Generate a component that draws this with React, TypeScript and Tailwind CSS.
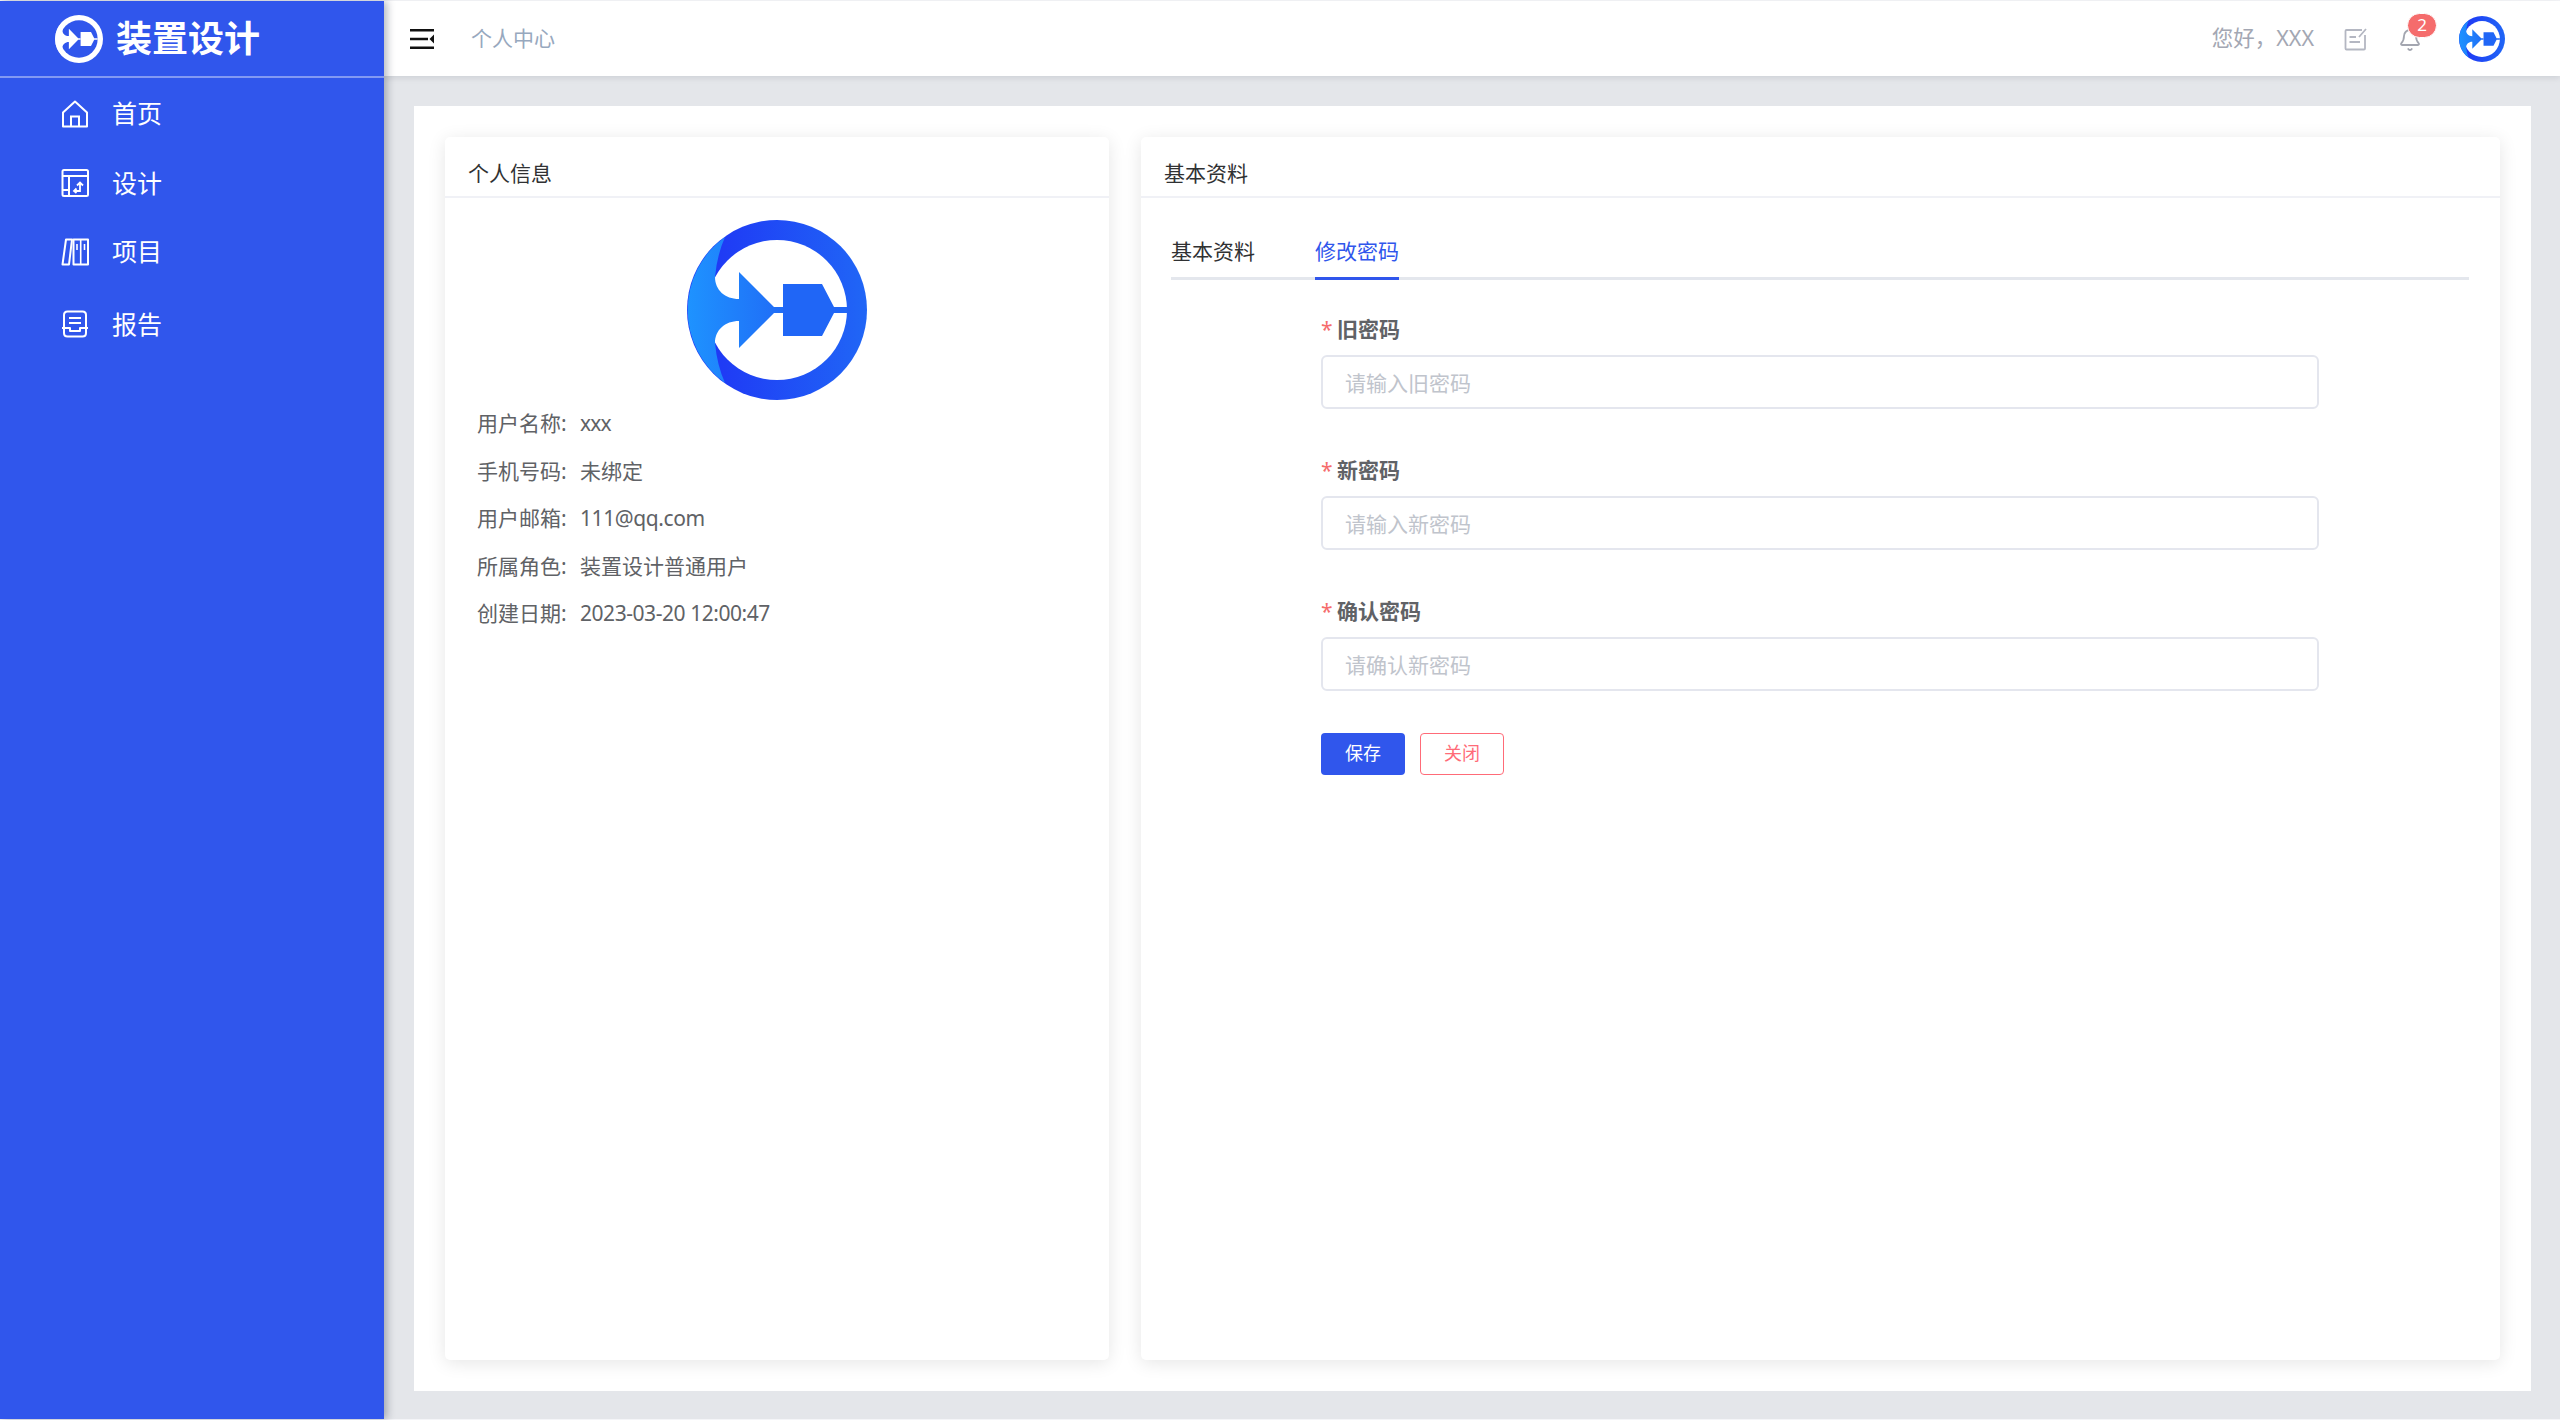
import { Bell } from 'lucide-react'

const FONT = "font-['Noto_Sans','Noto_Sans_CJK_SC',sans-serif]"

// company mark, traced from the avatar
function Logo({ mono = false, className = '' }: { mono?: boolean; className?: string }) {
  return (
    <svg viewBox="0 0 180 180" className={className}>
      <defs>
        <linearGradient id="ring" gradientUnits="userSpaceOnUse" x1="30" y1="0" x2="180" y2="0">
          <stop offset="0" stopColor="#1f3af5" />
          <stop offset="1" stopColor="#2066f6" />
        </linearGradient>
        <linearGradient id="lens" gradientUnits="userSpaceOnUse" x1="0" y1="0" x2="96" y2="0">
          <stop offset="0" stopColor="#1e93ff" />
          <stop offset="1" stopColor="#206cf6" />
        </linearGradient>
      </defs>
      <circle cx="90" cy="90" r="90" fill={mono ? '#ffffff' : 'url(#ring)'} />
      <circle cx="90" cy="90" r="70" fill={mono ? '#3056ec' : '#ffffff'} />
      <path
        d="M38 17Q30 35 28 57C28 70 38 79 52 79L52 52L87 87L96 87L96 93L87 93L52 128L52 101C38 101 28 110 28 123Q30 145 38 163A90 90 0 0 1 38 17Z"
        fill={mono ? '#ffffff' : 'url(#lens)'}
      />
      <path d="M96 64L135 64L147 87L160 87L160 93L147 93L135 116L96 116Z" fill={mono ? '#ffffff' : '#2066f6'} />
    </svg>
  )
}

function HomeIcon() {
  return (
    <svg viewBox="0 0 28 28" className="w-[28px] h-[28px]" fill="none" stroke="currentColor" strokeWidth="2">
      <path d="M2 12.5L14 1.5L26 12.5V26.5H2Z" strokeLinejoin="round" />
      <path d="M10 26.5V16.5H18V26.5" />
    </svg>
  )
}

function DesignIcon() {
  return (
    <svg viewBox="0 0 28 28" className="w-[28px] h-[28px]" fill="none" stroke="currentColor" strokeWidth="2">
      <rect x="1.5" y="1" width="25.5" height="26" rx="1.5" />
      <path d="M1.5 7H27M8 7V27M1.5 21H8" />
      <path d="M13 22H19V14M16 16.5L19 13.5L22 16.5M15.5 19.5L13 22L15.5 24" strokeWidth="1.8" />
    </svg>
  )
}

function ProjectIcon() {
  return (
    <svg viewBox="0 0 28 28" className="w-[28px] h-[28px]" fill="none" stroke="currentColor" strokeWidth="2">
      <path d="M5 1.5H11L8 26.5H1.5Z" strokeLinejoin="round" />
      <path d="M12.5 1.5H27V26.5H12.5Z" strokeLinejoin="round" />
      <path d="M19.7 1.5V26.5M16 6V12M23.5 6V12" strokeWidth="1.6" />
    </svg>
  )
}

function ReportIcon() {
  return (
    <svg viewBox="0 0 28 28" className="w-[28px] h-[28px]" fill="none" stroke="currentColor" strokeWidth="2">
      <path d="M3 17V5Q3 1.5 6.5 1.5H21.5Q25 1.5 25 5V17" />
      <path d="M8 8H20M8 13H20" />
      <path d="M1 18H9V21H19V18H27M3 18V23Q3 26.5 6.5 26.5H21.5Q25 26.5 25 23V18" strokeLinejoin="round" />
    </svg>
  )
}

const menu = [
  { label: '首页', icon: <HomeIcon />, h: 'h-[71px]' },
  { label: '设计', icon: <DesignIcon />, h: 'h-[68px]' },
  { label: '项目', icon: <ProjectIcon />, h: 'h-[69px]' },
  { label: '报告', icon: <ReportIcon />, h: 'h-[76px]' },
]

const profile = [
  ['用户名称:', 'xxx', 'tracking-[-0.8px]'],
  ['手机号码:', '未绑定', ''],
  ['用户邮箱:', '111@qq.com', 'tracking-[-0.4px]'],
  ['所属角色:', '装置设计普通用户', ''],
  ['创建日期:', '2023-03-20 12:00:47', 'tracking-[-0.45px]'],
]

const fields = [
  ['旧密码', '请输入旧密码'],
  ['新密码', '请输入新密码'],
  ['确认密码', '请确认新密码'],
]

function Sidebar() {
  return (
    <aside className="relative z-20 w-[384px] shrink-0 bg-[#3056ec] text-white shadow-[3px_0_8px_rgba(0,21,41,0.3)]">
      <div className="h-[77px] pl-[55px] flex items-center gap-[13px] border-b-2 border-white/40">
        <Logo mono className="w-[48px] h-[48px]" />
        <span className="text-[36px] leading-none font-bold">装置设计</span>
      </div>
      <nav>
        {menu.map((item) => (
          <div key={item.label} className={`${item.h} pl-[61px] flex items-center gap-[23px]`}>
            {item.icon}
            <span className="text-[25px] leading-none">{item.label}</span>
          </div>
        ))}
      </nav>
    </aside>
  )
}

function Topbar() {
  return (
    <header className="relative z-10 h-[75px] shrink-0 bg-white shadow-[0_2px_6px_rgba(0,21,41,0.1)] flex items-center pl-[26px] pr-[55px]">
      <svg viewBox="0 0 24 20" className="w-[24px] h-[20px]">
        <path d="M0 0H24V2.5H0ZM0 8.7H18V11.2H0ZM0 17.5H24V20H0Z" fill="#111" />
        <path d="M24 5.5V14.5L19.5 10Z" fill="#111" />
      </svg>
      <span className="ml-[37px] text-[21px] text-[#97a8be]">个人中心</span>
      <div className="ml-auto flex items-center">
        <span className="text-[21.5px] text-[#a3a7b3]">您好，XXX</span>
        <svg viewBox="0 0 24 24" className="ml-[30px] w-[24px] h-[24px]" fill="none" stroke="#b4b7c2" strokeWidth="1.8">
          <path d="M18 3H2.5Q1.5 3 1.5 4V21.5Q1.5 22.5 2.5 22.5H20Q21 22.5 21 21.5V8" />
          <path d="M5.5 10H12M5.5 15H16M15 10L22 2" />
        </svg>
        <div className="relative ml-[31px] w-[22px] h-[26px]">
          <Bell size={24} strokeWidth={1.8} className="absolute left-[-1px] top-[2px] text-[#a3a6b0]" />
          <span className="absolute left-[8px] top-[-13px] w-[30px] h-[25px] rounded-full bg-[#f56c6c] border border-white text-white text-[17px] leading-[22px] text-center">
            2
          </span>
        </div>
        <Logo className="ml-[38px] w-[46px] h-[46px]" />
      </div>
    </header>
  )
}

function ProfileCard() {
  return (
    <section className="rounded-[5px] bg-white shadow-[0_3px_18px_rgba(0,0,0,0.1)]">
      <h2 className="h-[61px] pl-[23px] pt-[24px] border-b-2 border-[#f0f1f6] text-[21px] leading-[24px] text-[#303133]">
        个人信息
      </h2>
      <Logo className="mt-[22px] mx-auto w-[180px] h-[180px]" />
      <dl className="pl-[32px] text-[21px] text-[#606266]">
        {profile.map(([k, v, cls]) => (
          <div key={k} className="h-[47.5px] flex items-center">
            <dt className="w-[103px]">{k}</dt>
            <dd className={cls}>{v}</dd>
          </div>
        ))}
      </dl>
    </section>
  )
}

function PasswordCard() {
  return (
    <section className="rounded-[5px] bg-white shadow-[0_3px_18px_rgba(0,0,0,0.1)]">
      <h2 className="h-[61px] pl-[23px] pt-[24px] border-b-2 border-[#f0f1f6] text-[21px] leading-[24px] text-[#303133]">
        基本资料
      </h2>
      <div className="pl-[30px] pr-[31px]">
        <div className="h-[82px] flex items-end gap-[60px] border-b-[3px] border-[#e4e7ed] text-[21px]">
          <span className="h-[50px] -mb-[3px] pb-[3px] flex items-center border-b-[3px] border-transparent text-[#303133]">基本资料</span>
          <span className="h-[50px] -mb-[3px] pb-[3px] flex items-center border-b-[3px] border-[#3056ec] text-[#3056ec]">修改密码</span>
        </div>
        <form className="mt-[25px] ml-[150px] w-[998px]">
          {fields.map(([label, hint]) => (
            <div key={label} className="mb-[37px]">
              <label className="h-[50px] flex items-center text-[21px] font-bold text-[#606266]">
                <span className="w-[16px] font-normal text-[#f56c6c]">*</span>
                {label}
              </label>
              <input
                readOnly
                type="text"
                placeholder={hint}
                className="block w-full h-[54px] px-[22px] pt-[1px] rounded-[6px] border-2 border-[#e4e6ee] bg-white text-[21px] placeholder:text-[#c0c4cc] outline-none"
              />
            </div>
          ))}
          <div className="mt-[42px] flex gap-[15px]">
            <button type="button" className="w-[84px] h-[42px] pb-[2px] rounded-[4px] bg-[#3056ec] text-white text-[18px]">
              保存
            </button>
            <button type="button" className="w-[84px] h-[42px] pb-[2px] rounded-[4px] border border-[#ff6b78] bg-white text-[#ff6b78] text-[18px]">
              关闭
            </button>
          </div>
        </form>
      </div>
    </section>
  )
}

export default function App() {
  return (
    <div className={`${FONT} h-[1420px] py-px bg-[#f4f5f8] flex overflow-hidden`}>
      <Sidebar />
      <main className="flex-1 min-w-0 flex flex-col bg-[#e4e6ea]">
        <Topbar />
        <div className="flex-1 min-h-0 pt-[30px] pb-[28px] pl-[30px] pr-[29px] flex">
          <div className="flex-1 p-[31px] bg-white grid grid-cols-[664px_1359px] gap-[32px]">
            <ProfileCard />
            <PasswordCard />
          </div>
        </div>
      </main>
    </div>
  )
}
